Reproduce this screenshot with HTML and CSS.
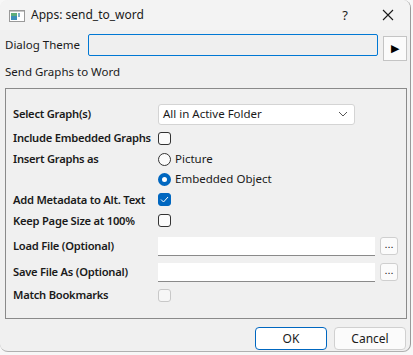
FILE: index.html
```html
<!DOCTYPE html>
<html lang="en">
<head>
    <meta charset="UTF-8">
    <title>Apps: send_to_word</title>
    <link rel="stylesheet" href="styles.css">
</head>
<body>

<div class="window">
    <div class="titlebar">
        <svg class="app-icon" width="16" height="14" viewBox="0 0 16 14">
            <rect x="0.5" y="1.5" width="15" height="11" fill="#fff" stroke="#9a9a9a"/>
            <rect x="2" y="4" width="6" height="7" fill="#3c8fb8"/>
            <rect x="2" y="4" width="6" height="3" fill="#5fae7a"/>
            <rect x="9" y="4" width="2" height="4" fill="#7fb0c8"/>
            <rect x="1" y="2" width="14" height="1" fill="#c8c8c8"/>
        </svg>
        <span class="title">Apps: send_to_word</span>
        <span class="help">?</span>
        <svg class="close" width="12" height="12" viewBox="0 0 12 12">
            <path d="M1 1 L11 11 M11 1 L1 11" stroke="#1a1a1a" stroke-width="1.1" fill="none"/>
        </svg>
    </div>

    <div class="theme-row">
        <span class="theme-label">Dialog Theme</span>
        <div class="theme-input"></div>
        <button class="theme-btn">&#9654;</button>
    </div>

    <div class="section-title">Send Graphs to Word</div>

    <div class="group">
        <div class="row r-select">
            <span class="label">Select Graph(s)</span>
            <div class="combo">
                <span>All in Active Folder</span>
                <svg width="10" height="6" viewBox="0 0 10 6"><path d="M1 1 L5 5 L9 1" stroke="#555" fill="none"/></svg>
            </div>
        </div>
        <div class="row r-include">
            <span class="label">Include Embedded Graphs</span>
            <span class="check"></span>
        </div>
        <div class="row r-insert">
            <span class="label">Insert Graphs as</span>
            <div class="radios">
                <div class="radio-line"><span class="radio"></span>Picture</div>
                <div class="radio-line"><span class="radio on"></span>Embedded Object</div>
            </div>
        </div>
        <div class="row r-add">
            <span class="label">Add Metadata to Alt. Text</span>
            <span class="check on">
                <svg width="9" height="7" viewBox="0 0 9 7"><path d="M1 3.5 L3.5 6 L8 1" stroke="#fff" stroke-width="1" fill="none"/></svg>
            </span>
        </div>
        <div class="row r-keep">
            <span class="label">Keep Page Size at 100%</span>
            <span class="check"></span>
        </div>
        <div class="row r-file">
            <span class="label">Load File (Optional)</span>
            <div class="text-input"></div>
            <button class="dots">...</button>
        </div>
        <div class="row r-file">
            <span class="label">Save File As (Optional)</span>
            <div class="text-input"></div>
            <button class="dots">...</button>
        </div>
        <div class="row r-match">
            <span class="label">Match Bookmarks</span>
            <span class="check off"></span>
        </div>
    </div>

    <div class="buttons">
        <button class="btn btn-ok">OK</button>
        <button class="btn">Cancel</button>
    </div>
</div>

</body>
</html>
```

FILE: styles.css
```css
body { margin: 0; background: #f7f7f7; font-family: "Segoe UI", "Noto Sans", sans-serif; font-size: 11.5px; line-height: 16px; color: #1a1a1a; }
.window { width: 410px; height: 351px; background: #f0f0f0; border-right: 1px solid #9a9a9a; border-bottom: 1px solid #b0b0b0; border-radius: 8px; overflow: hidden; }
.titlebar { height: 30px; display: flex; align-items: center; background: #f3f3f3; }
.app-icon { margin-left: 9px; margin-top: 1px; }
.title { margin-left: 6px; font-size: 12px; flex: 1; }
.help { font-size: 13px; margin-right: 34px; }
.close { margin-right: 16px; }

.theme-row { display: flex; align-items: center; height: 26px; margin-top: 4px; }
.theme-label { width: 83px; padding-left: 5px; margin-top: -5px; white-space: nowrap; }
.theme-input { width: 288px; height: 20px; border: 1px solid #0078d4; border-radius: 2px; background: #efefef; margin-top: -4px; }
.theme-btn { width: 24px; height: 25px; margin-left: 5px; margin-top: 2px; border: 1px solid #c4c4c4; background: #fbfbfb; font-size: 11px; padding: 0; color: #000; }

.section-title { padding-left: 5px; margin-top: 4px; height: 22px; }

.group { margin: 2px 3px 0 5px; border: 1px solid #8a8a8a; padding: 14px 0 12px 7px; height: 203px; }
.row { display: flex; align-items: center; height: 22px; }
.label { width: 145px; font-size: 11.2px; font-weight: 600; white-space: nowrap; letter-spacing: -0.25px; }
.r-include { margin-top: 2px; }
.r-insert { height: 40px; align-items: flex-start; }
.r-insert .label { margin-top: 2px; }
.r-add { height: 21px; }
.r-keep { height: 21px; }
.r-file { margin-top: 4px; }
.r-match { margin-top: 1px; }

.combo { border: 1px solid #d4d4d4; border-radius: 3px; background: #fff; display: flex; align-items: center; justify-content: space-between; padding: 0 6px 0 4px; box-sizing: border-box; width: 197px; height: 21px; }

.check { width: 11px; height: 11px; border: 1px solid #333; border-radius: 3px; background: #fbfbfb; display: flex; align-items: center; justify-content: center; }
.check.on { background: #0067c0; border-color: #0067c0; }
.check.off { border-color: #c8c8c8; background: #f6f6f6; }

.radios { display: flex; flex-direction: column; }
.radio-line { display: flex; align-items: center; height: 20px; }
.radio { width: 11px; height: 11px; border: 1px solid #333; border-radius: 50%; margin-right: 4px; background: #fbfbfb; }
.radio.on { width: 5px; height: 5px; border: 4px solid #0067c0; background: #fff; }

.text-input { width: 217px; height: 18px; background: #fff; border-bottom: 1px solid #8a8a8a; }
.dots { width: 18px; height: 18px; margin-left: 5px; border: 1px solid #cfcfcf; border-radius: 3px; background: #fbfbfb; font-size: 11px; padding: 0 0 4px; line-height: 10px; color: #1a1a1a; }

.buttons { display: flex; justify-content: flex-end; gap: 7px; margin-top: 8px; padding-right: 4px; }
.btn { width: 72px; height: 23px; background: #fbfbfb; border: 1px solid #d0d0d0; border-radius: 4px; font-family: "Segoe UI", "Noto Sans", sans-serif; font-size: 12px; color: #1a1a1a; }
.btn-ok { border-color: #0067c0; background: #fff; }
```
